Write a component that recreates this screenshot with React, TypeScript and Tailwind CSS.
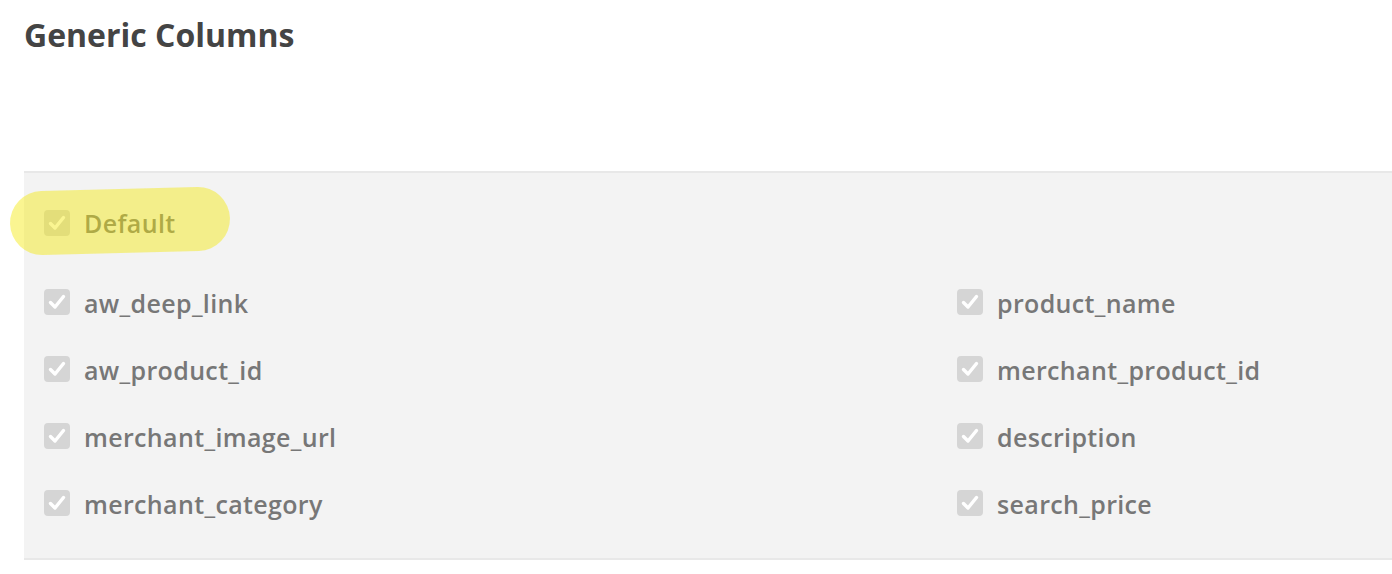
const LEFT = ["aw_deep_link", "aw_product_id", "merchant_image_url", "merchant_category"];
const RIGHT = ["product_name", "merchant_product_id", "description", "search_price"];

function Box() {
  return (
    <span className="flex h-[26px] w-[26px] shrink-0 items-center justify-center rounded-[4px] bg-[#d5d5d5]">
      <svg viewBox="0 0 26 26" className="h-[26px] w-[26px]" fill="none">
        <path d="M6.5 13.5 L11 18 L19.5 7.5" stroke="white" strokeWidth={3.4} strokeLinecap="round" strokeLinejoin="round" />
      </svg>
    </span>
  );
}

function Item({ label }: { label: string }) {
  return (
    <div className="flex h-[67px] items-center gap-[14px]">
      <Box />
      <span className="pt-[5px] text-[25px] font-semibold tracking-[0.35px] text-[#777777]">{label}</span>
    </div>
  );
}

export default function App() {
  return (
    <div className="min-h-[574px] bg-white font-['Open_Sans',sans-serif]">
      <h1 className="px-[24px] pt-[12px] text-[32px] font-bold leading-[46px] text-[#444444]">
        Generic Columns
      </h1>

      <div className="ml-[24px] mt-[113px] border-y-2 border-[#e8e8e8] bg-[#f3f3f3] pb-[22px] pl-[20px] pt-[16px]">
        <div className="relative flex h-[67px] items-center gap-[14px]">
          <Box />
          <span className="pt-[3px] text-[25px] font-semibold tracking-[0.35px] text-[#777777]">Default</span>
          <div className="pointer-events-none absolute left-[-34px] top-[0px] h-[64px] w-[220px] -rotate-[1.5deg] rounded-full bg-[#f3e90b]/45" />
        </div>
        <div className="mt-[12px] grid grid-cols-[913px_1fr]">
          <div>
            {LEFT.map((l) => (
              <Item key={l} label={l} />
            ))}
          </div>
          <div>
            {RIGHT.map((l) => (
              <Item key={l} label={l} />
            ))}
          </div>
        </div>
      </div>
    </div>
  );
}
